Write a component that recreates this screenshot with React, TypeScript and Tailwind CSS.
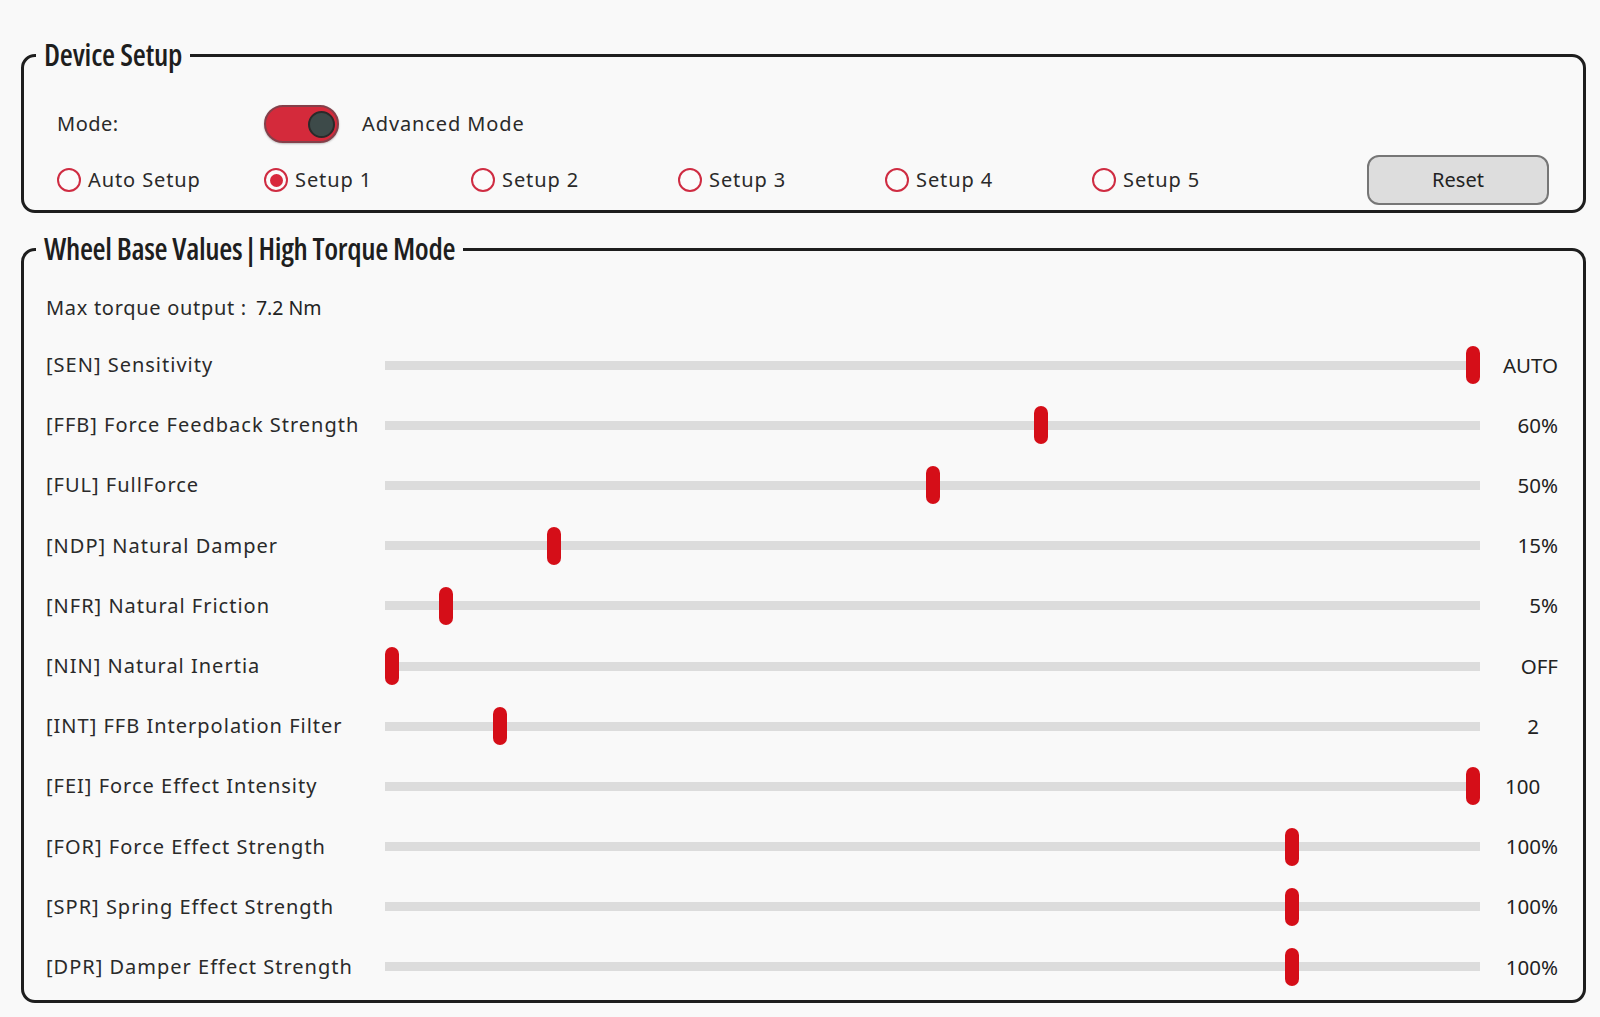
import React from 'react';

const bodyFont = { fontFamily: '"Noto Sans", "Open Sans", sans-serif' };
const titleFont = {
  fontFamily: '"Open Sans", sans-serif',
  fontStretch: '75%',
};

interface SliderRow {
  label: string;
  value: string;
  pos: number;
  valueClass?: string;
}

const rows: SliderRow[] = [
  { label: '[SEN] Sensitivity', value: 'AUTO', pos: 1 },
  { label: '[FFB] Force Feedback Strength', value: '60%', pos: 0.6 },
  { label: '[FUL] FullForce', value: '50%', pos: 0.5 },
  { label: '[NDP] Natural Damper', value: '15%', pos: 0.15 },
  { label: '[NFR] Natural Friction', value: '5%', pos: 0.05 },
  { label: '[NIN] Natural Inertia', value: 'OFF', pos: 0 },
  { label: '[INT] FFB Interpolation Filter', value: '2', pos: 0.1, valueClass: 'text-right pr-[19px]' },
  { label: '[FEI] Force Effect Intensity', value: '100', pos: 1, valueClass: 'text-left pl-[25px]' },
  { label: '[FOR] Force Effect Strength', value: '100%', pos: 0.833 },
  { label: '[SPR] Spring Effect Strength', value: '100%', pos: 0.833 },
  { label: '[DPR] Damper Effect Strength', value: '100%', pos: 0.833 },
];

const setups = ['Auto Setup', 'Setup 1', 'Setup 2', 'Setup 3', 'Setup 4', 'Setup 5'];

function Radio({ label, checked }: { label: string; checked?: boolean }) {
  return (
    <div className="w-[207px] flex items-center gap-[7px]">
      <span className="w-[24px] h-[24px] rounded-full border-2 border-[#cf2c42] flex items-center justify-center bg-[#fbfbfb]">
        {checked && <span className="w-[13px] h-[13px] rounded-full bg-[#d8283c]" />}
      </span>
      <span className="text-[20px] text-[#2a2a2a] tracking-[0.9px]">{label}</span>
    </div>
  );
}

function Slider({ pos }: { pos: number }) {
  return (
    <div className="flex-1 relative h-[9px] bg-[#dcdcdc]">
      <div
        className="absolute top-1/2 -translate-y-1/2 w-[14px] h-[38px] rounded-full bg-[#d50e18]"
        style={{ left: `calc(${pos} * (100% - 14px))` }}
      />
    </div>
  );
}

export default function App() {
  return (
    <div className="w-full h-[1017px] bg-[#f9f9f9] pl-[21px] pr-[14px] pt-[37px] overflow-hidden" style={bodyFont}>
      {/* Device Setup */}
      <fieldset className="border-[3px] border-[#1e1e1e] rounded-[14px] pl-[33px] pr-[34px] pb-[5px]">
        <legend className="ml-[-21px] px-[8px] text-[30px] leading-[36px] text-[#1e1e1e] font-semibold tracking-[-0.2px]" style={titleFont}>
          Device Setup
        </legend>
        <div className="flex items-center pt-[32px]">
          <span className="w-[207px] text-[20px] text-[#2a2a2a] tracking-[0.5px]">Mode:</span>
          <div className="w-[75px] h-[38px] rounded-full bg-[#d42a3b] border-2 border-[#84404a] flex items-center justify-end pr-[2px] shadow-[0_1px_2px_rgba(0,0,0,0.25)]">
            <span className="w-[27px] h-[27px] rounded-full bg-[#3d4a49] border-2 border-[#2a2a2a]" />
          </div>
          <span className="ml-[23px] text-[20px] text-[#2a2a2a] tracking-[0.9px]">Advanced Mode</span>
        </div>
        <div className="flex items-center mt-[12px]">
          {setups.map((s, i) => (
            <Radio key={s} label={s} checked={i === 1} />
          ))}
          <button className="ml-auto w-[182px] h-[50px] rounded-[12px] bg-[#dddddd] border-2 border-[#767676] text-[20px] text-[#222]">
            Reset
          </button>
        </div>
      </fieldset>

      {/* Wheel Base Values */}
      <fieldset className="mt-[18px] border-[3px] border-[#1e1e1e] rounded-[14px] pl-[22px] pr-[25px] pb-[3px]">
        <legend className="ml-[-10px] px-[8px] text-[30px] leading-[36px] text-[#1e1e1e] font-semibold tracking-[-0.35px]" style={titleFont}>
          Wheel Base Values <span className="mx-[-3px]">|</span> High Torque Mode
        </legend>
        <div className="pt-[29px] h-[53px] flex items-center text-[20px] text-[#2a2a2a] tracking-[0.7px]">
          <span>Max torque output :</span>
          <span className="ml-[9px] text-[19.5px] text-[#222] tracking-normal">7.2 Nm</span>
        </div>
        <div className="mt-[15px] flex flex-col">
          {rows.map((r) => (
            <div key={r.label} className="h-[60.2px] flex items-center">
              <span className="w-[339px] text-[20px] text-[#2a2a2a] tracking-[1px]">{r.label}</span>
              <Slider pos={r.pos} />
              <span className={`w-[78px] text-[20.5px] text-[#222] ${r.valueClass ?? 'text-right'}`}>{r.value}</span>
            </div>
          ))}
        </div>
      </fieldset>
    </div>
  );
}
